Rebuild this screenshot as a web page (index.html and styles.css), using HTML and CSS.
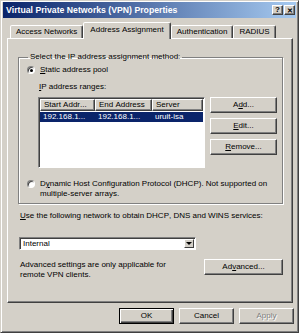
FILE: index.html
```html
<!DOCTYPE html>
<html lang="en">
<head>
    <meta charset="UTF-8">
    <title>Virtual Private Networks (VPN) Properties</title>
    <link rel="stylesheet" href="styles.css">
</head>
<body>
    <div class="window">
        <div class="titlebar">
            <span class="title">Virtual Private Networks (VPN) Properties</span>
            <div class="caption-buttons">
                <span class="cap-btn">?</span>
                <span class="cap-btn close">&#x2715;</span>
            </div>
        </div>

        <div class="tabs">
            <div class="tab">Access Networks</div>
            <div class="tab active">Address Assignment</div>
            <div class="tab">Authentication</div>
            <div class="tab">RADIUS</div>
        </div>

        <div class="panel">
            <fieldset class="group">
                <legend>Select the IP address assignment method:</legend>

                <div class="option">
                    <span class="radio checked"></span>
                    <span><u>S</u>tatic address pool</span>
                </div>

                <div class="ranges-label"><u>I</u>P address ranges:</div>

                <div class="ranges">
                    <div class="listview">
                        <div class="lv-row lv-head">
                            <span>Start Addr...</span>
                            <span>End Address</span>
                            <span>Server</span>
                        </div>
                        <div class="lv-row selected">
                            <span>192.168.1...</span>
                            <span>192.168.1...</span>
                            <span>uruit-isa</span>
                        </div>
                    </div>
                    <div class="side-buttons">
                        <button class="btn">A<u>d</u>d...</button>
                        <button class="btn"><u>E</u>dit...</button>
                        <button class="btn"><u>R</u>emove...</button>
                    </div>
                </div>

                <div class="option dhcp">
                    <span class="radio"></span>
                    <span>D<u>y</u>namic Host Configuration Protocol (DHCP). Not supported on<br>multiple-server arrays.</span>
                </div>
            </fieldset>

            <div class="net-label"><u>U</u>se the following network to obtain DHCP, DNS and WINS services:</div>

            <div class="select">
                <span class="select-value">Internal</span>
                <span class="select-arrow"></span>
            </div>

            <div class="advanced-row">
                <p class="note">Advanced settings are only applicable for remote VPN clients.</p>
                <button class="btn advanced">Ad<u>v</u>anced...</button>
            </div>
        </div>

        <div class="dialog-buttons">
            <button class="btn default">OK</button>
            <button class="btn">Cancel</button>
            <button class="btn disabled">Apply</button>
        </div>
    </div>
</body>
</html>
```

FILE: styles.css
```css
* {
    box-sizing: border-box;
}

body {
    margin: 0;
    background-color: #ffffff;
    font-family: 'Liberation Sans', Arial, sans-serif;
    font-size: 8px;
    line-height: 10px;
    font-kerning: none;
    color: #000000;
}

u {
    text-decoration: underline;
    text-underline-offset: 1px;
}

.window {
    width: 299px;
    height: 333px;
    display: flex;
    flex-direction: column;
    background-color: #d4d0c8;
    border: 1px solid;
    border-color: #d4d0c8 #404040 #404040 #d4d0c8;
    box-shadow: inset 1px 1px #ffffff, inset -1px -1px #808080;
    padding: 1px 2px 2px 2px;
}

/* title bar */
.titlebar {
    height: 16px;
    display: flex;
    align-items: center;
    justify-content: space-between;
    padding: 0 1px 0 3px;
    background: linear-gradient(to right, #0a246a, #a6caf0);
}

.title {
    color: #ffffff;
    font-weight: bold;
    font-size: 8.7px;
}

.caption-buttons {
    display: flex;
    gap: 1px;
}

.cap-btn {
    width: 11px;
    height: 10px;
    display: flex;
    align-items: center;
    justify-content: center;
    font-size: 8px;
    font-weight: bold;
    line-height: 1;
    background-color: #d4d0c8;
    border: 1px solid;
    border-color: #ffffff #404040 #404040 #ffffff;
    box-shadow: inset -1px -1px #808080;
}

.cap-btn.close {
    font-size: 7px;
}

/* tabs */
.tabs {
    display: flex;
    align-items: flex-end;
    height: 16px;
    margin-top: 4px;
    padding-left: 7px;
}

.tab {
    height: 13px;
    padding: 0 5px;
    line-height: 11px;
    border: 1px solid;
    border-bottom: none;
    border-color: #ffffff #404040 transparent #ffffff;
    box-shadow: inset -1px 0 #808080;
    border-radius: 2px 2px 0 0;
    background-color: #d4d0c8;
}

.tab.active {
    position: relative;
    z-index: 1;
    height: 17px;
    margin-bottom: -1px;
    padding: 0 6px;
    line-height: 13px;
}

/* tab page */
.panel {
    height: 265px;
    margin: 0 3px 0 4px;
    padding: 13px 9px 0 10px;
    border: 1px solid;
    border-color: #ffffff #404040 #404040 #ffffff;
    box-shadow: inset -1px -1px #808080;
}

.group {
    margin: 0;
    padding: 0 0 4px 8px;
    border: 1px solid #808080;
    box-shadow: inset 1px 1px #ffffff, 1px 1px #ffffff;
}

.group legend {
    padding: 0 2px;
    margin-left: 1px;
}

.option {
    display: flex;
    align-items: flex-start;
    gap: 5px;
    margin-top: 3px;
}

.option.dhcp {
    margin-top: 11px;
    white-space: nowrap;
}

.radio {
    flex: none;
    width: 8px;
    height: 8px;
    margin-top: 1px;
    border-radius: 50%;
    background-color: #ffffff;
    border: 1px solid;
    border-color: #808080 #ffffff #ffffff #808080;
    box-shadow: inset 1px 1px #404040;
    display: flex;
    align-items: center;
    justify-content: center;
}

.radio.checked::after {
    content: "";
    width: 3px;
    height: 3px;
    border-radius: 50%;
    background-color: #000000;
    margin: 1px 0 0 1px;
}

.ranges-label {
    margin: 7px 0 0 12px;
}

.ranges {
    display: flex;
    gap: 5px;
    margin: 5px 0 0 11px;
}

.listview {
    width: 167px;
    height: 71px;
    background-color: #ffffff;
    border: 1px solid;
    border-color: #808080 #ffffff #ffffff #808080;
    box-shadow: inset 1px 1px #404040;
    padding: 1px 1px 0 1px;
}

.lv-row {
    display: grid;
    grid-template-columns: 55px 57px 1fr;
    height: 10px;
}

.lv-row span {
    padding-left: 3px;
    white-space: nowrap;
    overflow: hidden;
}

.lv-head {
    height: 12px;
    margin-bottom: 1px;
}

.lv-head span {
    background-color: #d4d0c8;
    line-height: 10px;
    border: 1px solid;
    border-color: #ffffff #404040 #404040 #ffffff;
    box-shadow: inset -1px -1px #808080;
}

.lv-row.selected {
    background-color: #0a246a;
    color: #ffffff;
}

.side-buttons {
    display: flex;
    flex-direction: column;
    gap: 5px;
}

.btn {
    font-family: inherit;
    font-size: 8px;
    line-height: 10px;
    color: #000000;
    width: 67px;
    height: 16px;
    padding: 0;
    background-color: #d4d0c8;
    border: 1px solid;
    border-color: #ffffff #404040 #404040 #ffffff;
    box-shadow: inset -1px -1px #808080;
}

.net-label {
    margin: 7px 0 0 2px;
}

.select {
    width: 177px;
    height: 13px;
    margin: 16px 0 0 1px;
    display: flex;
    justify-content: space-between;
    background-color: #ffffff;
    border: 1px solid;
    border-color: #808080 #ffffff #ffffff #808080;
    box-shadow: inset 1px 1px #404040;
    padding: 1px 1px 1px 3px;
}

.select-arrow {
    width: 10px;
    background-color: #d4d0c8;
    border: 1px solid;
    border-color: #ffffff #404040 #404040 #ffffff;
    display: flex;
    align-items: center;
    justify-content: center;
}

.select-arrow::after {
    content: "";
    border-left: 3px solid transparent;
    border-right: 3px solid transparent;
    border-top: 3px solid #000000;
}

.advanced-row {
    display: flex;
    justify-content: space-between;
    align-items: flex-start;
    margin-top: 9px;
}

.note {
    margin: 1px 0 0 2px;
    width: 150px;
}

.btn.advanced {
    width: 79px;
}

/* bottom buttons */
.dialog-buttons {
    display: flex;
    justify-content: flex-end;
    gap: 5px;
    margin-top: 5px;
    padding-right: 2px;
}

.dialog-buttons .btn {
    width: 55px;
}

.btn.default {
    border: 1px solid #000000;
    box-shadow: inset 1px 1px #ffffff, inset -1px -1px #404040, inset -2px -2px #808080;
}

.btn.disabled {
    color: #808080;
    text-shadow: 1px 1px #ffffff;
}
```
